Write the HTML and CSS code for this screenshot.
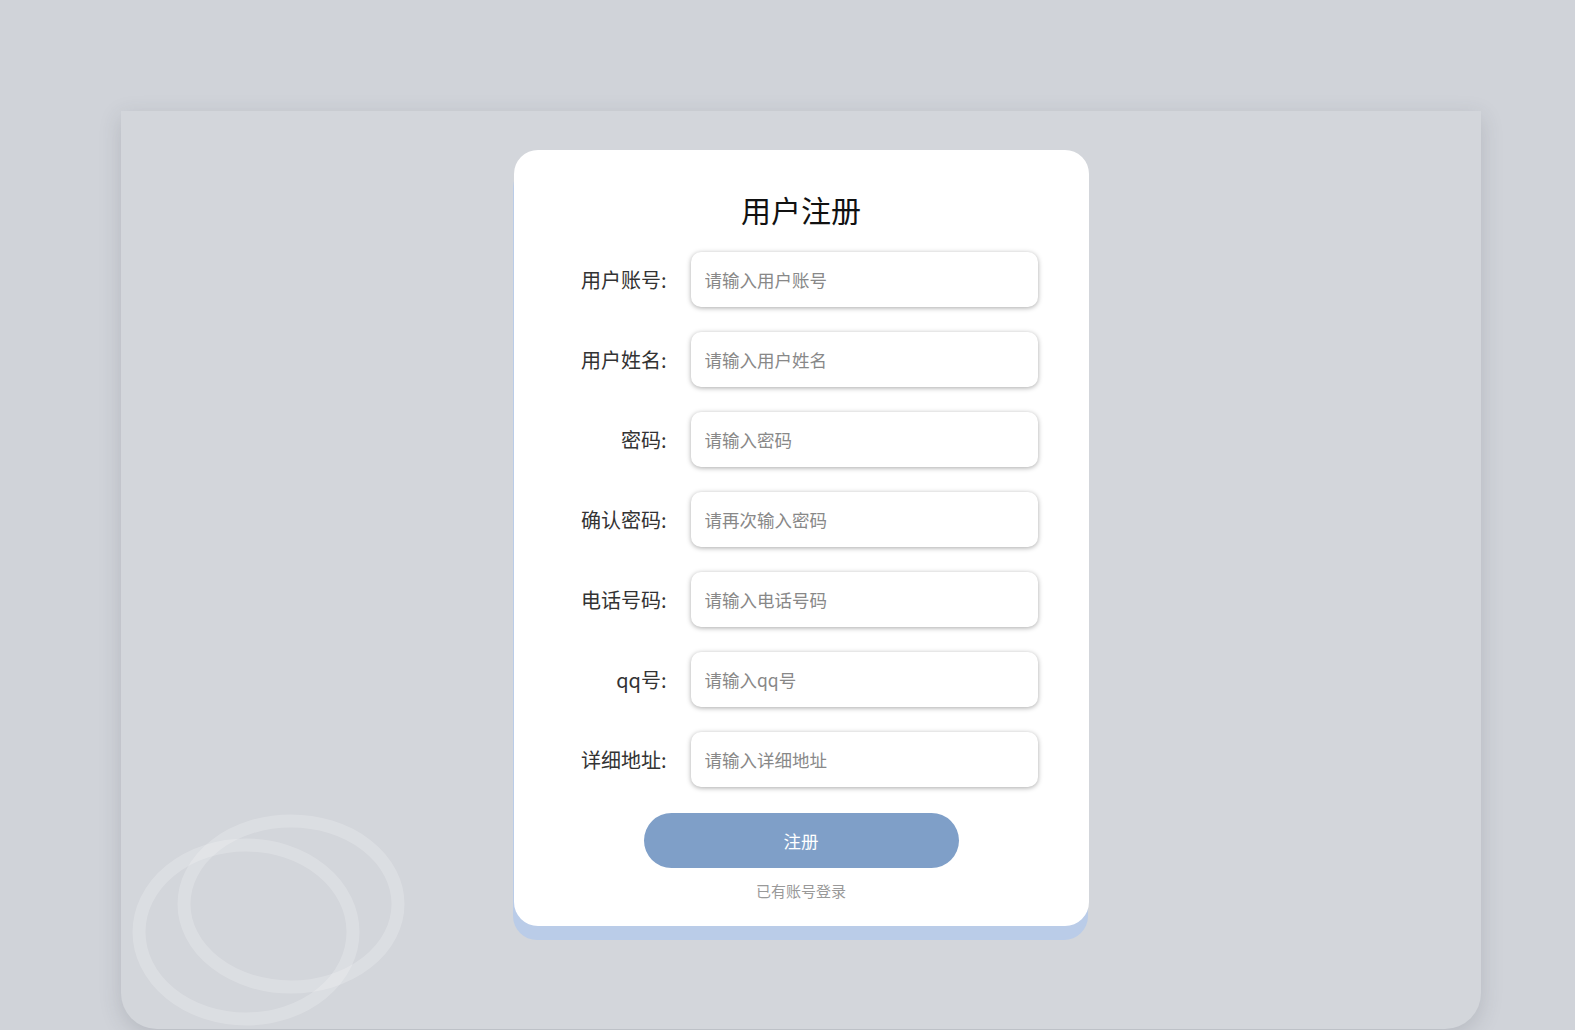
FILE: index.html
```html
<!DOCTYPE html>
<html lang="zh-CN">
<head>
<meta charset="utf-8">
<title>用户注册</title>
<link rel="stylesheet" href="styles.css">
</head>
<body>
<div class="page">
  <div class="panel">
    <svg class="rings" width="400" height="300" viewBox="0 0 400 300" aria-hidden="true">
      <ellipse cx="170" cy="93" rx="107" ry="83" fill="none" stroke="rgba(255,255,255,0.2)" stroke-width="13"/>
      <ellipse cx="125" cy="121" rx="107" ry="87" fill="none" stroke="rgba(255,255,255,0.2)" stroke-width="13"/>
    </svg>
    <form class="card">
      <h1 class="title">用户注册</h1>
      <div class="row"><label class="label">用户账号:</label><input class="field" type="text" placeholder="请输入用户账号"></div>
      <div class="row"><label class="label">用户姓名:</label><input class="field" type="text" placeholder="请输入用户姓名"></div>
      <div class="row"><label class="label">密码:</label><input class="field" type="password" placeholder="请输入密码"></div>
      <div class="row"><label class="label">确认密码:</label><input class="field" type="password" placeholder="请再次输入密码"></div>
      <div class="row"><label class="label">电话号码:</label><input class="field" type="text" placeholder="请输入电话号码"></div>
      <div class="row"><label class="label">qq号:</label><input class="field" type="text" placeholder="请输入qq号"></div>
      <div class="row"><label class="label">详细地址:</label><input class="field" type="text" placeholder="请输入详细地址"></div>
      <button class="submit" type="button">注册</button>
      <a class="login" href="#">已有账号登录</a>
    </form>
  </div>
</div>
</body>
</html>
```
FILE: styles.css
```css
html, body {
  margin: 0;
  padding: 0;
  height: 100%;
  overflow: hidden;
}
body {
  background: #d0d3d9;
  font-family: "Microsoft YaHei", "Noto Sans CJK SC", "Noto Sans", sans-serif;
}
.page {
  padding: 111px 0 0 121px;
}
.panel {
  position: relative;
  width: 1360px;
  height: 918px;
  background: #d3d6db;
  border-radius: 0 0 36px 36px;
  box-shadow: 0 6px 22px rgba(60, 66, 80, 0.18);
  overflow: hidden;
}
.rings {
  position: absolute;
  left: 0;
  top: 700px;
}
.card {
  position: relative;
  width: 575px;
  margin: 39px auto 0;
  padding: 39px 0 25px;
  background: #ffffff;
  border-radius: 24px;
  box-shadow: -1px 14px 0 0 #bacce8;
  display: flex;
  flex-direction: column;
  box-sizing: border-box;
}
.title {
  margin: 0 0 23px;
  font-size: 30px;
  line-height: 40px;
  font-weight: normal;
  color: #111;
  text-align: center;
}
.row {
  display: flex;
  align-items: center;
  margin-bottom: 25px;
}
.label {
  width: 153px;
  text-align: right;
  font-size: 20px;
  color: #333;
  margin-right: 24px;
}
.field {
  width: 347px;
  height: 55px;
  box-sizing: border-box;
  border: none;
  border-radius: 10px;
  background: #fff;
  padding: 0 14px;
  font-family: inherit;
  font-size: 17.5px;
  color: #333;
  box-shadow: 0 1px 5px rgba(0, 0, 0, 0.34);
  outline: none;
}
.field::placeholder {
  color: #888;
}
.submit {
  align-self: center;
  width: 315px;
  height: 55px;
  margin-top: 1px;
  border: none;
  border-radius: 28px;
  background: #7f9fc8;
  color: #fff;
  font-family: inherit;
  font-size: 17.5px;
  cursor: pointer;
}
.login {
  margin-top: 13px;
  text-align: center;
  font-size: 15px;
  line-height: 20px;
  color: #999;
  text-decoration: none;
}
```
